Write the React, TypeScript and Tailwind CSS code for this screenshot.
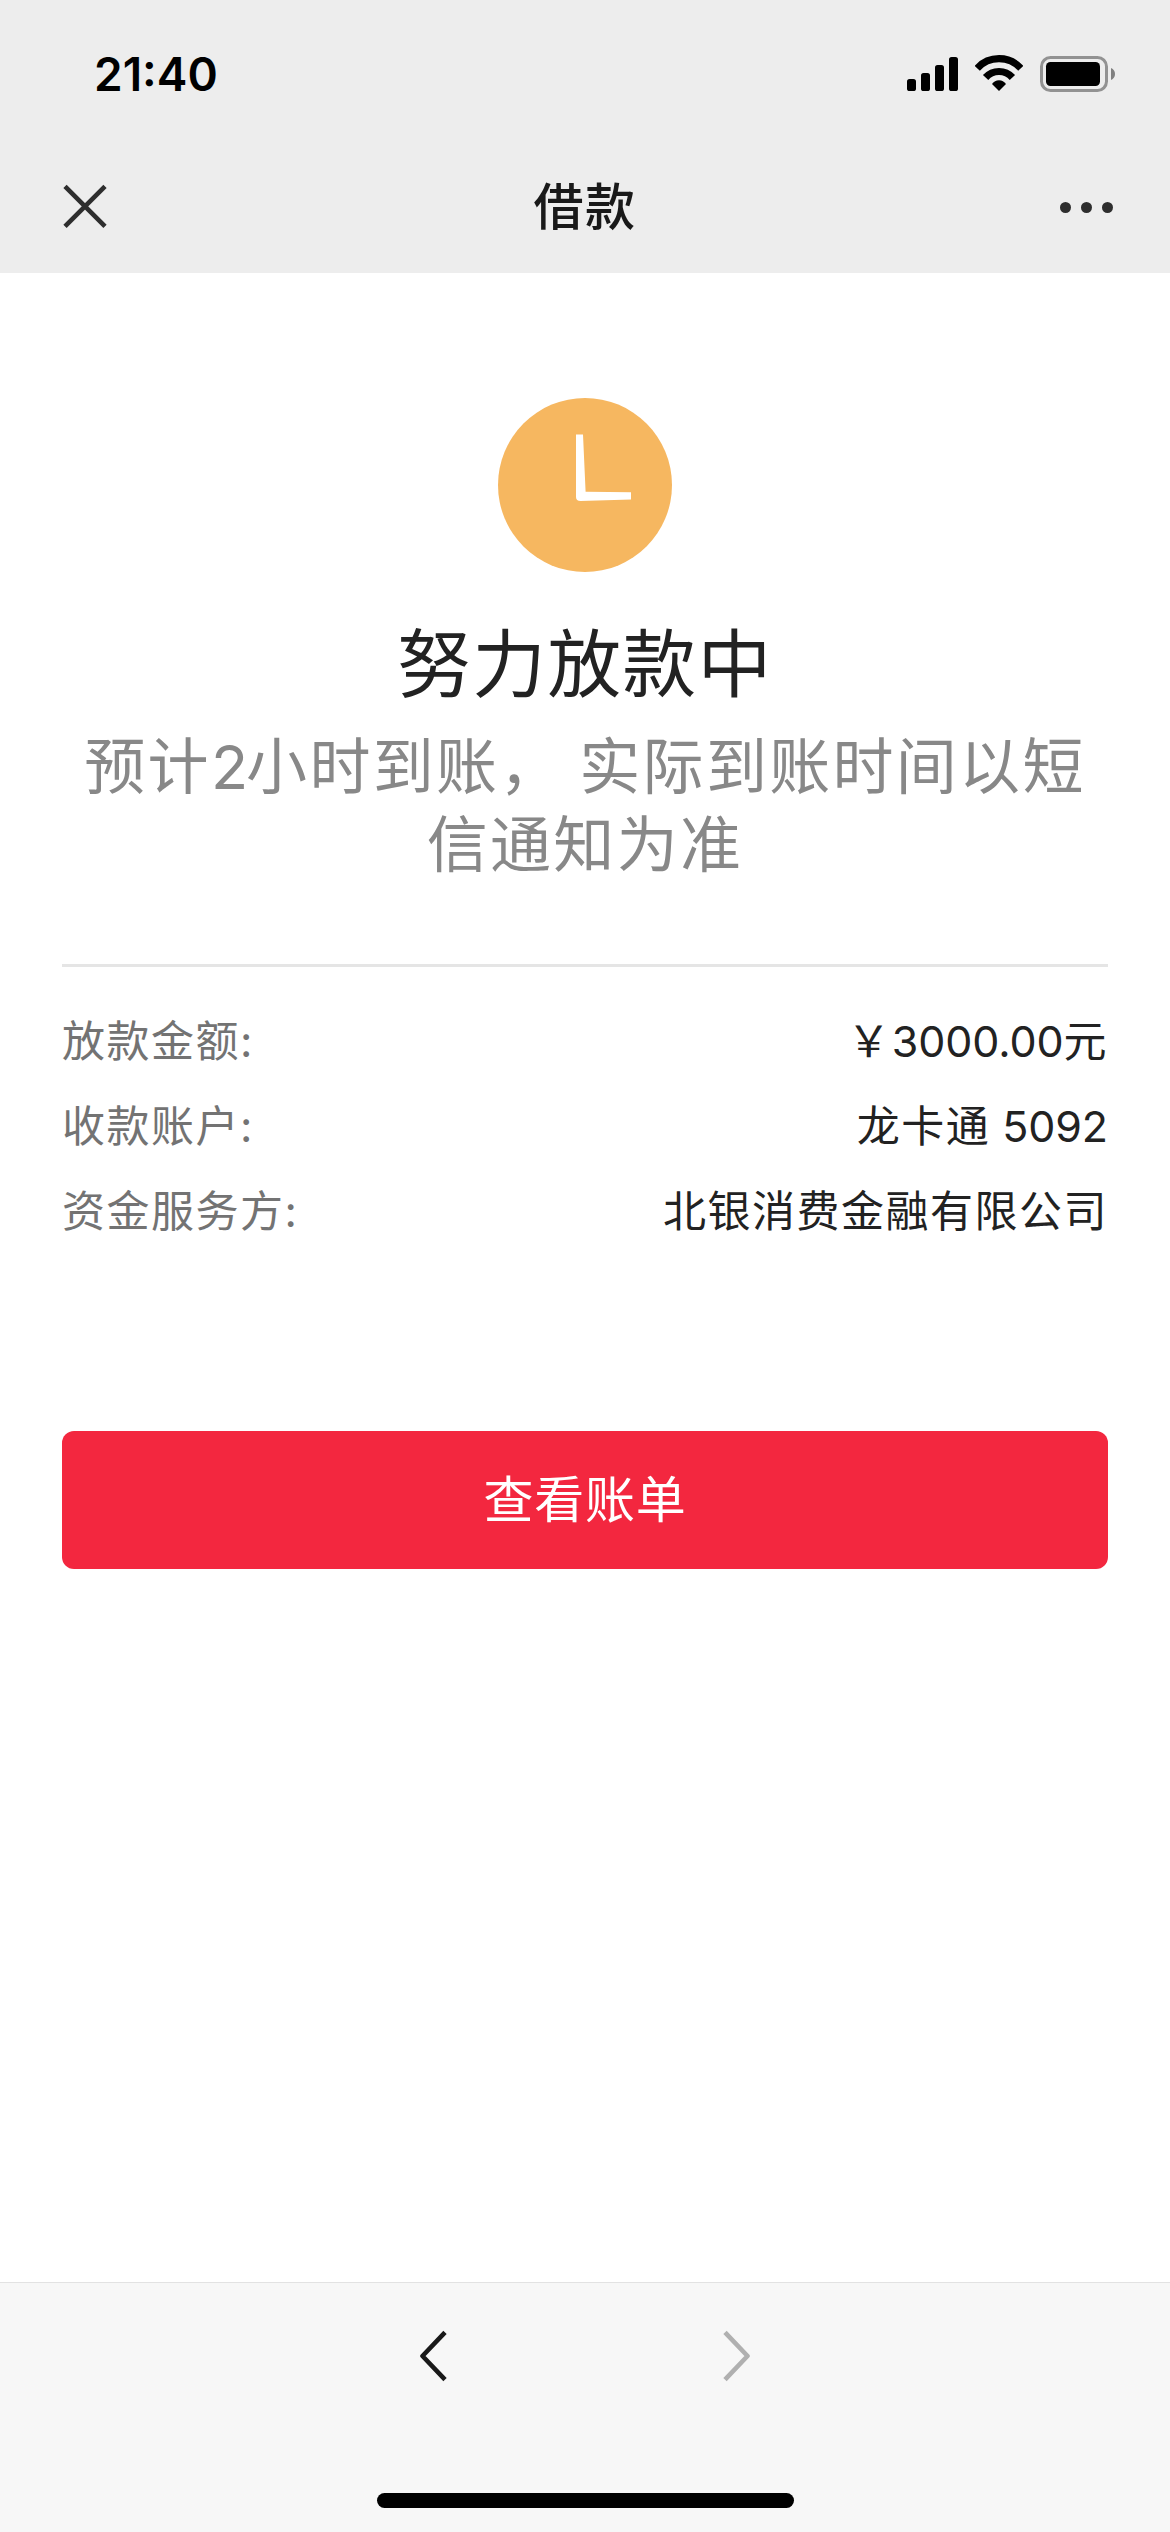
import type { ReactNode } from "react";

const DETAILS = [
  { label: "放款金额:", prefix: "￥", number: "3000.00", suffix: "元" },
  { label: "收款账户:", prefix: "龙卡通", number: " 5092", suffix: "" },
  { label: "资金服务方:", prefix: "北银消费金融有限公司", number: "", suffix: "" },
];

function StatusBar() {
  return (
    <div className="flex h-[141px] items-start justify-between pt-[46px] pr-[55px] pl-[94px]">
      <span className="text-[46px] leading-[56px] font-semibold text-black">21:40</span>
      <div className="flex items-center pt-[9px]">
        <svg className="h-[36px] w-[51px]" viewBox="0 0 51 36" fill="#000">
          <rect x="0" y="24" width="9" height="12" rx="2.6" />
          <rect x="14" y="18" width="9" height="18" rx="2.6" />
          <rect x="28" y="10" width="9" height="26" rx="2.6" />
          <rect x="42" y="2" width="9" height="34" rx="2.6" />
        </svg>
        <svg className="ml-[17px] h-[36px] w-[48px]" viewBox="0 0 48 36" fill="none" stroke="#000">
          <path d="M2.2 13.3a29.6 29.6 0 0 1 43.6 0" strokeWidth="7.2" />
          <path d="M10.6 22.5a18 18 0 0 1 26.8 0" strokeWidth="7.2" />
          <path d="M24 36l-7-7a8.5 8.5 0 0 1 14 0z" fill="#000" stroke="none" />
        </svg>
        <svg className="ml-[17px] h-[36px] w-[75px] overflow-visible" viewBox="0 0 75 36">
          <rect x="1.5" y="2.5" width="65" height="33" rx="9" fill="none" stroke="#929292" strokeWidth="3" />
          <rect x="6" y="7" width="54" height="24" rx="4.5" fill="#000" />
          <path d="M71 13c2.6 1 4 3.4 4 6s-1.4 5-4 6z" fill="#808080" />
        </svg>
      </div>
    </div>
  );
}

function NavBar() {
  return (
    <div className="flex h-[132px] items-center justify-between pr-[57px] pl-[62px]">
      <svg className="h-[46px] w-[46px]" viewBox="0 0 46 46" stroke="#2e2e2e" strokeWidth="4.6">
        <path d="M3 2.400l40 40M43 2.400l-40 40" />
      </svg>
      <h1 className="pl-[2px] text-[50px] leading-[72px] font-medium tracking-[1.5px] text-[#191919]">借款</h1>
      <div className="flex gap-[10px]">
        <i className="size-[11px] rounded-full bg-[#2e2e2e]" />
        <i className="size-[11px] rounded-full bg-[#2e2e2e]" />
        <i className="size-[11px] rounded-full bg-[#2e2e2e]" />
      </div>
    </div>
  );
}

function ClockIcon() {
  return (
    <svg className="size-[174px]" viewBox="0 0 174 174">
      <circle cx="87" cy="87" r="87" fill="#f6b760" />
      <path d="M78 36.500h7l2.600 57.200 45.400.6v7.200l-50.500 1.500q-4.500 0-4.500-4z" fill="#fff" />
    </svg>
  );
}

function Row({ label, children }: { label: string; children: ReactNode }) {
  return (
    <div className="flex h-[85px] items-center justify-between text-[43px] leading-[60px] tracking-[1.5px]">
      <span className="text-[#737373]">{label}</span>
      <span className="text-[#222]">{children}</span>
    </div>
  );
}

function Toolbar() {
  return (
    <footer className="flex h-[250px] flex-col items-center justify-between border-t border-[#e2e2e2] bg-[#f7f7f7] pt-[45px] pb-[24px]">
      <div className="flex gap-[276px]">
        <svg className="h-[56px] w-[27px]" viewBox="0 0 27 56" fill="none" stroke="#191919" strokeWidth="4.6" strokeLinejoin="round">
          <path d="M25 4.300L2.500 28 25 51.700" />
        </svg>
        <svg className="h-[56px] w-[27px]" viewBox="0 0 27 56" fill="none" stroke="#b0b0b0" strokeWidth="4.6" strokeLinejoin="round">
          <path d="M2 4.300L24.500 28 2 51.700" />
        </svg>
      </div>
      <div className="h-[15px] w-[417px] rounded-full bg-black" />
    </footer>
  );
}

export default function App() {
  return (
    <div className="flex h-[2532px] w-[1170px] flex-col bg-white font-['Inter','Noto_Sans_CJK_SC',sans-serif]">
      <header className="bg-[#ededed]">
        <StatusBar />
        <NavBar />
      </header>
      <main className="flex-1 px-[62px] pt-[125px]">
        <section className="flex flex-col items-center border-b-[3px] border-[#e5e5e5] pb-[80px]">
          <ClockIcon />
          <h2 className="mt-[41px] text-[73.5px] leading-[104px] tracking-[1.6px] text-[#222]">努力放款中</h2>
          <p className="mt-[11px] text-center text-[61px] leading-[78px] tracking-[2.3px] text-[#888]">
            预计<span className="tracking-[-2px]">2</span>小时到账，<span className="tracking-[-0.5px]"> </span>实际到账时间以短
            <br />
            信通知为准
          </p>
        </section>
        <section className="pt-[31px]">
          {DETAILS.map((d) => (
            <Row key={d.label} label={d.label}>
              {d.prefix}
              <span className="tracking-[-0.1px]">{d.number}</span>
              {d.suffix}
            </Row>
          ))}
        </section>
        <button className="mt-[178px] block h-[138px] w-full rounded-[12px] bg-[#f3273f] text-[50px] tracking-[0.8px] text-white">
          查看账单
        </button>
      </main>
      <Toolbar />
    </div>
  );
}
